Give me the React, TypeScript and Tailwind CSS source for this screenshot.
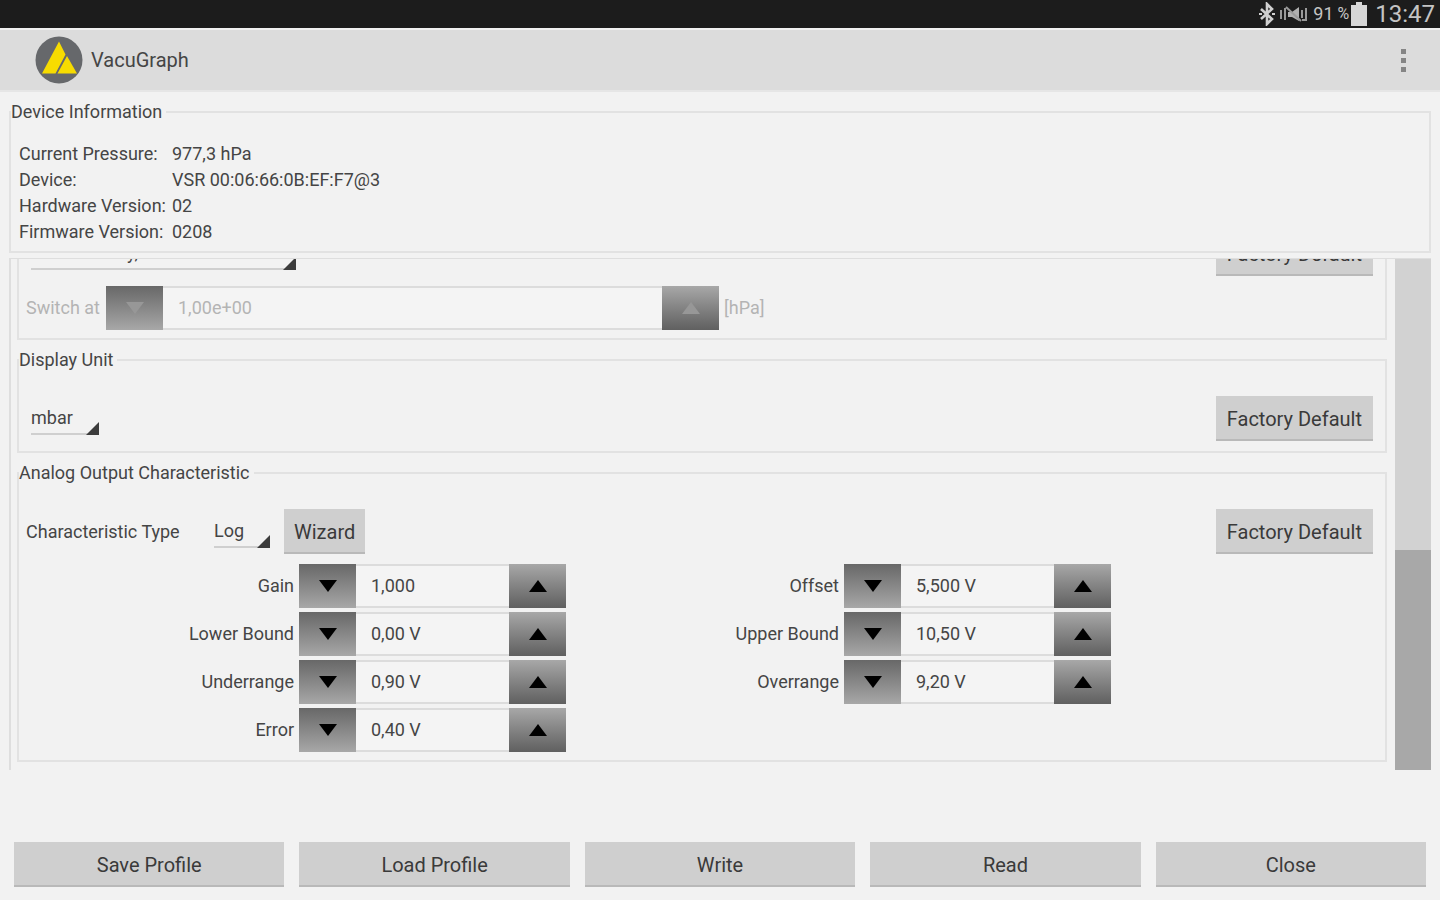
import { ReactNode, useId } from "react";

const Group = ({ title, children }: { title?: string; children: ReactNode }) => {
  return (
    <fieldset className="min-w-0 border-2 border-[#e2e2e2]">
      {title && (
        <legend className="h-5 pr-1 text-lg leading-5">{title}</legend>
      )}
      {children}
    </fieldset>
  );
};

type ButtonProps = { children: ReactNode; className?: string };

const Button = ({ children, className = "" }: ButtonProps) => {
  return (
    <button
      type="button"
      className={`h-[45px] bg-[#cfcfcf] text-xl text-[#3a3a3a] shadow-[inset_0_-2px_0_#b9b9b9] ${className}`}
    >
      {children}
    </button>
  );
};

type DropDownProps = { label: string; options: string[]; className: string };

const DropDown = ({ label, options, className }: DropDownProps) => {
  return (
    <div className={`relative ml-[5px] ${className}`}>
      <select
        aria-label={label}
        className="block h-8 w-full appearance-none border-b-2 border-[#cfcfcf] bg-transparent text-lg outline-none"
      >
        {options.map((option) => (
          <option key={option}>{option}</option>
        ))}
      </select>
      {/* corner marker */}
      <svg
        viewBox="0 0 13 13"
        className="pointer-events-none absolute right-0 bottom-0 h-[13px] w-[13px]"
      >
        <path d="M13 0V13H0Z" fill="#3c3c3c" />
      </svg>
    </div>
  );
};

type StepperProps = { id: string; value: string; disabled?: boolean };

const Stepper = ({ id, value, disabled = false }: StepperProps) => {
  const arrow = disabled ? "#979797" : "#000";
  return (
    <div className="flex h-11 min-w-0">
      <button
        type="button"
        aria-label="Decrease"
        disabled={disabled}
        className="flex w-[57px] shrink-0 items-center justify-center bg-linear-to-b from-[#686868] to-[#a8a8a8]"
      >
        <svg viewBox="0 0 20 12" className="h-3 w-5">
          <path d="M1 0H19L10 12Z" fill={arrow} />
        </svg>
      </button>
      <input
        id={id}
        type="text"
        defaultValue={value}
        disabled={disabled}
        className="w-[153px] min-w-0 grow border-y-2 border-[#dcdcdc] bg-[#f4f4f4] px-[15px] text-lg outline-none disabled:text-[#b4b4b4]"
      />
      <button
        type="button"
        aria-label="Increase"
        disabled={disabled}
        className="flex w-[57px] shrink-0 items-center justify-center bg-linear-to-b from-[#a8a8a8] to-[#606060]"
      >
        <svg viewBox="0 0 20 12" className="h-3 w-5">
          <path d="M10 0L19 12H1Z" fill={arrow} />
        </svg>
      </button>
    </div>
  );
};

const Field = ({ label, value }: { label: string; value: string }) => {
  const id = useId();
  return (
    <>
      <label htmlFor={id} className="text-right text-lg">
        {label}
      </label>
      <Stepper id={id} value={value} />
    </>
  );
};

const StatusBar = () => {
  return (
    <div className="flex h-7 shrink-0 items-center justify-end bg-[#1c1c1c] pr-[5px] text-[#c4c4c4]">
      {/* bluetooth */}
      <svg viewBox="0 0 16 24" className="h-6 w-4" fill="none" stroke="#d0d0d0">
        <path d="M2 7L13 17L8 22V2L13 7L2 17" strokeWidth="2.6" />
        <path d="M0 12H3M13 12H16" strokeWidth="2" />
      </svg>
      {/* muted speaker */}
      <svg
        viewBox="0 0 28 18"
        className="ml-1 h-[18px] w-7"
        fill="none"
        stroke="#9a9a9a"
        strokeWidth="2"
      >
        <path d="M2 5V14M6 3V15" />
        <path d="M9 7H13L20 2V16L13 12H9Z" fill="#b0b0b0" stroke="none" />
        <path d="M7 2L22 16M23 5V13M27 3V15H23" />
      </svg>
      <span className="mr-1 ml-[6px] text-lg">91</span>
      <span className="text-base">%</span>
      {/* battery */}
      <svg viewBox="0 0 16 24" className="mx-[2px] h-6 w-4" fill="#d6d6d6">
        <path d="M5 0H11V3H16V24H0V3H5Z" />
      </svg>
      <span className="ml-[6px] text-2xl">13:47</span>
    </div>
  );
};

const deviceInfo = [
  ["Current Pressure:", "977,3 hPa"],
  ["Device:", "VSR 00:06:66:0B:EF:F7@3"],
  ["Hardware Version:", "02"],
  ["Firmware Version:", "0208"],
];

const outputFields = [
  ["Gain", "1,000"],
  ["Offset", "5,500 V"],
  ["Lower Bound", "0,00 V"],
  ["Upper Bound", "10,50 V"],
  ["Underrange", "0,90 V"],
  ["Overrange", "9,20 V"],
  ["Error", "0,40 V"],
];

const actions = ["Save Profile", "Load Profile", "Write", "Read", "Close"];

const App = () => {
  return (
    <div className="flex h-screen flex-col bg-[#f2f2f2] font-[Roboto,sans-serif] text-[#454545]">
      <StatusBar />

      {/* app bar */}
      <header className="flex h-16 shrink-0 items-center border-t-2 border-b-2 border-t-[#f0f0f0] border-b-[#e6e6e6] bg-[#dcdcdc] pr-8 pl-[35px]">
        <svg viewBox="0 0 48 48" className="h-12 w-12">
          <circle cx="24" cy="24" r="23.5" fill="#66686b" />
          <path d="M24 5.5L30.5 18.5L20.5 37.5H7Z" fill="#f7dc00" />
          <path d="M32 20L42 37.5H22.5Z" fill="#f7dc00" />
        </svg>
        <h1 className="ml-2 grow text-xl">VacuGraph</h1>
        <button type="button" aria-label="More options">
          <svg viewBox="0 0 8 24" className="h-6 w-2" fill="#858585">
            <path d="M1 1H6V6H1ZM1 10H6V15H1ZM1 19H6V24H1Z" />
          </svg>
        </button>
      </header>

      <main className="flex min-h-0 grow flex-col gap-[5px] px-[9px] pt-[10px]">
        <Group title="Device Information">
          <dl className="grid grid-cols-[153px_1fr] pt-[19px] pb-[6px] pl-2 text-lg leading-[26px]">
            {deviceInfo.map(([name, value]) => (
              <div key={name} className="contents">
                <dt>{name}</dt>
                <dd>{value}</dd>
              </div>
            ))}
          </dl>
        </Group>

        {/* settings, scrolled to the end */}
        <div className="flex min-h-0 grow gap-2 border-t border-l-2 border-[#dedede] pl-[6px]">
          <div className="flex min-w-0 grow flex-col justify-end gap-[10px] overflow-hidden pb-2">
            <Group>
              <div className="flex items-center justify-between pt-[26px] pr-3 pl-[7px]">
                <DropDown
                  label="Switching mode"
                  options={["Continuously,"]}
                  className="w-[265px]"
                />
                <Button className="px-[11px]">Factory Default</Button>
              </div>
              <div className="grid grid-cols-[75px_613px_auto] items-center justify-start gap-x-[5px] pt-[10px] pb-2 pl-[7px] text-lg text-[#b4b4b4]">
                <label htmlFor="switch-at">Switch at</label>
                <Stepper id="switch-at" value="1,00e+00" disabled />
                <span>[hPa]</span>
              </div>
            </Group>

            <Group title="Display Unit">
              <div className="flex items-center justify-between pt-[26px] pr-3 pb-[10px] pl-[7px]">
                <DropDown
                  label="Display Unit"
                  options={["mbar", "hPa", "Torr"]}
                  className="w-[68px]"
                />
                <Button className="px-[11px]">Factory Default</Button>
              </div>
            </Group>

            <Group title="Analog Output Characteristic">
              <div className="flex items-center pt-[26px] pr-3 pl-[7px]">
                <span className="w-[183px] text-lg">Characteristic Type</span>
                <DropDown
                  label="Characteristic Type"
                  options={["Log", "Lin"]}
                  className="w-14"
                />
                <Button className="mr-auto ml-[14px] px-[10px]">Wizard</Button>
                <Button className="px-[11px]">Factory Default</Button>
              </div>
              <div className="grid grid-cols-[1fr_267px_1fr_267px] items-center gap-x-[5px] gap-y-1 pt-[10px] pr-[274px] pb-2 pl-[7px]">
                {outputFields.map(([label, value]) => (
                  <Field key={label} label={label} value={value} />
                ))}
              </div>
            </Group>
          </div>

          {/* scroll bar */}
          <div className="flex w-9 shrink-0 flex-col justify-end bg-[#d2d2d2]">
            <div className="h-[43%] bg-[#a8a8a8]" />
          </div>
        </div>
      </main>

      <footer className="flex shrink-0 gap-[15px] px-[14px] pt-[72px] pb-[13px]">
        {actions.map((action) => (
          <Button key={action} className="flex-1">
            {action}
          </Button>
        ))}
      </footer>
    </div>
  );
};

export default App;
